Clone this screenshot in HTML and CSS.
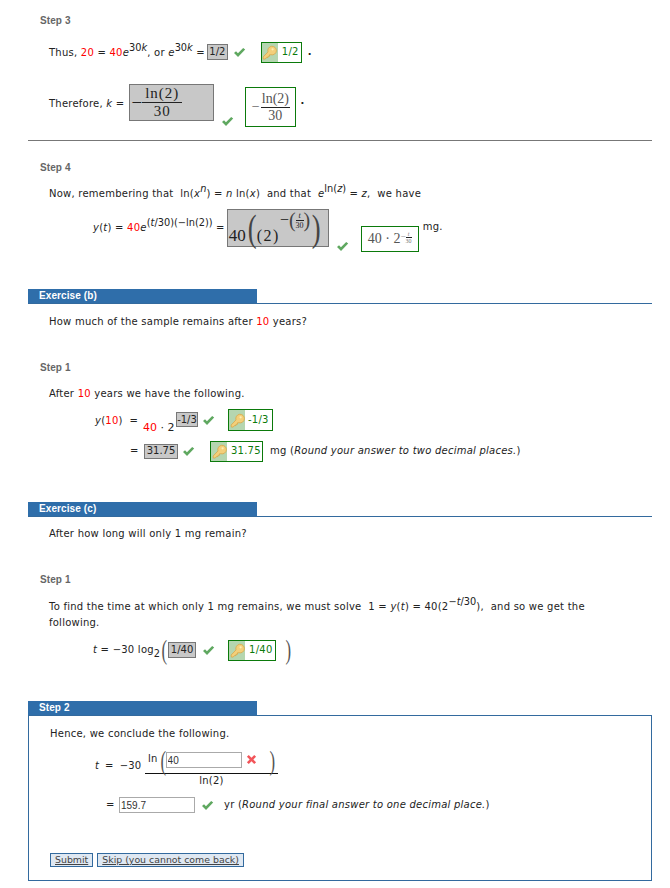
FILE: index.html
```html
<!DOCTYPE html>
<html lang="en">
<head>
<meta charset="utf-8">
<title>Exercise</title>
<link rel="stylesheet" href="styles.css">
</head>
<body>
<svg class="defs" width="0" height="0" aria-hidden="true">
  <symbol id="check" viewBox="0 0 14 12"><path d="M1 6.5 L3.2 4.6 L5.3 6.8 L11 1 L13.2 2.8 L5.4 11 Z" fill="#5fa860"/></symbol>
  <symbol id="cross" viewBox="0 0 12 12"><path d="M1 3 L3 1 L6 4 L9 1 L11 3 L8 6 L11 9 L9 11 L6 8 L3 11 L1 9 L4 6 Z" fill="#f2555a"/></symbol>
  <symbol id="key" viewBox="0 0 16 16"><path d="M1.2 12.8 L6.4 7.4 A4.6 4.6 0 1 1 9.6 10.4 L8 10.4 L8 12 L6.4 12 L6.4 13.4 L4.8 13.4 L3.4 15 L1.4 15 Z" fill="#f3cf7a" stroke="#d8a545" stroke-width=".8"/><circle cx="11.3" cy="4.6" r="1.2" fill="#fbeeb8"/></symbol>
</svg>
<main class="page">
  <h3 class="step">Step 3</h3>
  <div class="row r-thus">
    <span class="thus-label">Thus, <b class="num">20</b> = <b class="num">40</b><i>e</i><sup>30<i>k</i></sup>, or <i>e</i><sup>30<i>k</i></sup> =</span>
    <span class="given g-12">1/2</span>
    <svg class="check c-a"><use href="#check"/></svg>
    <span class="ans a-12"><span class="keycell"><svg class="key"><use href="#key"/></svg></span><span class="ansval">1/2</span></span>
    <span class="dot">.</span>
  </div>
  <div class="row r-there">
    <span class="there-label">Therefore, <i>k</i> =</span>
    <span class="given given-math g-k"><span class="minus">−</span><span class="frac"><span class="ftop">ln(2)</span><span class="fbot">30</span></span></span>
    <svg class="check c-k"><use href="#check"/></svg>
    <span class="mathans m-k"><span class="minus grey">−</span><span class="frac small"><span class="ftop">ln(2)</span><span class="fbot">30</span></span></span>
    <span class="dot dot-k">.</span>
  </div>
  <hr class="rule">

  <h3 class="step s4">Step 4</h3>
  <p class="line l-now">Now, remembering that&nbsp; ln(<i>x</i><sup><i>n</i></sup>) = <i>n</i> ln(<i>x</i>)&nbsp; and that&nbsp; <i>e</i><sup>ln(<i>z</i>)</sup> = <i>z</i>,&nbsp; we have</p>
  <div class="row r-yt">
    <span class="yt-label"><i>y</i>(<i>t</i>) = <b class="num">40</b><i>e</i><sup>(<i>t</i>/30)(−ln(2))</sup> =</span>
    <span class="given given-math g-exp"><span class="serif-big">40</span><span class="bigp">(</span><span class="serif-mid">(2)</span><span class="expo"><span class="minus">−</span><span class="midp">(</span><span class="frac tiny"><span class="ftop it">t</span><span class="fbot">30</span></span><span class="midp">)</span></span><span class="bigp">)</span></span>
    <svg class="check c-exp"><use href="#check"/></svg>
    <span class="mathans m-exp"><span>40 · 2</span><span class="msup">−</span><span class="frac micro"><span class="ftop it">t</span><span class="fbot">30</span></span></span>
    <span class="unit-mg">mg.</span>
  </div>

  <div class="tabbar tb-b"><span class="tab">Exercise (b)</span></div>
  <p class="line l-q">How much of the sample remains after <b class="num">10</b> years?</p>

  <h3 class="step s1b">Step 1</h3>
  <p class="line l-after">After <b class="num">10</b> years we have the following.</p>
  <div class="row r-y10">
    <span class="y10-label"><i>y</i>(<b class="num">10</b>)&nbsp; =</span>
    <span class="base"><b class="num">40</b> · 2</span>
    <span class="given g-13">-1/3</span>
    <svg class="check c-13"><use href="#check"/></svg>
    <span class="ans a-13"><span class="keycell"><svg class="key"><use href="#key"/></svg></span><span class="ansval">-1/3</span></span>
  </div>
  <div class="row r-eq">
    <span class="eq">=</span>
    <span class="given g-31">31.75</span>
    <svg class="check c-31"><use href="#check"/></svg>
    <span class="ans a-31"><span class="keycell"><svg class="key"><use href="#key"/></svg></span><span class="ansval">31.75</span></span>
    <span class="after-ans">mg (<i>Round your answer to two decimal places.</i>)</span>
  </div>

  <div class="tabbar tb-c"><span class="tab">Exercise (c)</span></div>
  <p class="line l-c">After how long will only 1 mg remain?</p>

  <h3 class="step s1c">Step 1</h3>
  <p class="line l-find">To find the time at which only 1 mg remains, we must solve&nbsp; 1 = <i>y</i>(<i>t</i>) = 40(2<sup>−<i>t</i>/30</sup>),&nbsp; and so we get the following.</p>
  <div class="row r-log">
    <span class="log-label"><i>t</i> = −30 log<sub>2</sub></span>
    <span class="logp">(</span>
    <span class="given g-140">1/40</span>
    <svg class="check c-140"><use href="#check"/></svg>
    <span class="ans a-140"><span class="keycell"><svg class="key"><use href="#key"/></svg></span><span class="ansval">1/40</span></span>
    <span class="logp lp-r">)</span>
  </div>

  <div class="tabbar tb-2"><span class="tab tab-step">Step 2</span></div>
  <section class="active">
    <p class="line l-hence">Hence, we conclude the following.</p>
    <div class="row r-t">
      <span class="t-label"><i>t</i> = −30</span>
      <span class="bigfrac">
        <span class="bf-top">
          <span class="ln-word">ln</span><span class="logp">(</span>
          <input class="field f-40" type="text" value="40" aria-label="answer">
          <svg class="cross"><use href="#cross"/></svg>
          <span class="logp lp-r2">)</span>
        </span>
        <span class="bf-bot">ln(2)</span>
      </span>
    </div>
    <div class="row r-final">
      <span class="eq-final">=</span>
      <input class="field f-final" type="text" value="159.7" aria-label="final answer">
      <svg class="check c-final"><use href="#check"/></svg>
      <span class="after-final">yr (<i>Round your final answer to one decimal place.</i>)</span>
    </div>
    <div class="buttons">
      <button class="btn" type="button">Submit</button>
      <button class="btn" type="button">Skip (you cannot come back)</button>
    </div>
  </section>
</main>
</body>
</html>
```

FILE: styles.css
```css
* { box-sizing: border-box; }
html, body { margin: 0; padding: 0; background: #fff; }
body { font-family: "DejaVu Sans", Verdana, sans-serif; font-size: 10px; letter-spacing: .24px; color: #222; line-height: 14px; }
.defs { position: absolute; }
.page { padding: 14px 18px 0 28px; width: 670px; }
i { font-style: italic; }
.num { color: #f00; font-weight: normal; }
sup { font-size: 9.8px; letter-spacing: 0; vertical-align: 5px; line-height: 0; }
sub { font-size: 9.8px; letter-spacing: 0; vertical-align: -4px; line-height: 0; }
.step { margin: 0 0 0 12px; font-family: "Liberation Sans", Arial, sans-serif; font-size: 10px; font-weight: bold; color: #666; line-height: 14px; letter-spacing: .1px; }
.line { margin: 0 0 0 21px; line-height: 16px; }
.row { display: flex; align-items: center; }
.dot { margin-left: 6px; font-weight: bold; }

.given { background: #c8c8c8; border: 1px solid #777; display: inline-flex; align-items: center; justify-content: center; flex: none; letter-spacing: 0; }
.given-math { font-family: "Liberation Serif", "Times New Roman", serif; color: #222; }
.check { width: 13px; height: 11px; flex: none; }
.ans { display: inline-flex; align-items: stretch; border: 1px solid #0b7a0b; background: #fff; color: #0b7a0b; flex: none; }
.keycell { background: #b5d6b0; width: 16px; display: flex; align-items: center; justify-content: center; flex: none; }
.key { width: 15px; height: 15px; }
.ansval { display: flex; align-items: center; padding: 0 0 0 4px; }
.mathans { border: 1px solid #0b7a0b; display: inline-flex; align-items: center; justify-content: center; font-family: "Liberation Serif", "Times New Roman", serif; color: #555; flex: none; letter-spacing: 0; }

.frac { display: inline-flex; flex-direction: column; align-items: center; font-size: 14px; line-height: 15px; }
.ftop { border-bottom: 1px solid #222; padding: 0 1px; text-align: center; width: 100%; }
.fbot { text-align: center; }
.it { font-style: italic; }
.minus { font-size: 14px; margin-right: 1px; }
.grey { color: #666; }

.r-thus { margin: 13px 0 0 21px; height: 22px; }
.thus-label { margin-top: 1px; }
.g-12 { width: 21px; height: 16px; margin-left: 2px; }
.c-a { margin-left: 5px; }
.a-12 { width: 41px; height: 21px; margin-left: 15px; }
.r-there { margin: 21px 0 0 21px; height: 44px; align-items: flex-start; }
.there-label { margin-top: 13px; }
.g-k { width: 85px; height: 37px; margin-left: 5px; justify-content: flex-start; padding-left: 1px; }
.g-k .minus { font-size: 19px; margin-right: 0; }
.g-k .frac { font-size: 15px; line-height: 17px; letter-spacing: 1px; }
.g-k .ftop { padding: 0 3px; }
.c-k { margin: 32px 0 0 7px; }
.m-k { width: 51px; height: 40px; margin: 3px 0 0 11px; }
.frac.small { font-size: 14px; line-height: 16px; }
.small .ftop { border-color: #222; color: #555; }
.dot-k { margin: 10px 0 0 4px; }
.rule { border: 0; border-top: 1px solid #777; margin: 12px 0 0; }

.s4 { margin-top: 20px; }
.l-now { margin-top: 11px; }
.r-yt { margin: 7px 0 0 65px; height: 43px; align-items: flex-start; }
.yt-label { margin-top: 12px; }
.g-exp { width: 102px; height: 38px; margin-left: 2px; justify-content: flex-start; padding-left: 1px; font-size: 15px; }
.serif-big { font-size: 17px; align-self: flex-end; margin-bottom: 3px; }
.bigp { font-size: 38px; line-height: 36px; color: #444; display: inline-block; width: 11px; text-align: center; transform: scaleX(.7); }
.serif-mid { font-size: 16px; align-self: flex-end; margin-bottom: 3px; letter-spacing: 1.5px; }
.expo { display: inline-flex; align-items: center; align-self: flex-start; }
.expo .minus { font-size: 16px; margin-right: 0; }
.midp { font-size: 20px; line-height: 20px; color: #444; }
.frac.tiny { font-size: 8px; line-height: 9px; }
.frac.micro { font-size: 6px; line-height: 6px; margin-bottom: 4px; color: #777; }
.c-exp { margin: 32px 0 0 7px; }
.m-exp { width: 58px; height: 26px; margin: 17px 0 0 12px; font-size: 14px; }
.msup { font-size: 9px; color: #777; margin-bottom: 6px; }
.unit-mg { margin: 11px 0 0 4px; }

.tabbar { border-bottom: 1px solid #336a9e; height: 15px; }
.tab { display: block; width: 229px; height: 14px; background: #2f6eaa; color: #fff; font-family: "Liberation Sans", Arial, sans-serif; font-size: 10px; font-weight: bold; line-height: 14px; padding-left: 11px; letter-spacing: .1px; }
.tb-b { margin-top: 37px; }
.l-q { margin-top: 10px; }
.s1b { margin-top: 31px; }
.l-after { margin-top: 11px; }
.r-y10 { margin: 7px 0 0 67px; height: 22px; }
.y10-label { margin-top: 2px; width: 48px; flex: none; }
.base { align-self: flex-end; width: 33px; flex: none; font-size: 11px; white-space: nowrap; letter-spacing: 0; margin-bottom: -4px; }
.g-13 { width: 22px; height: 15px; margin-top: -1px; }
.c-13 { margin-left: 4px; }
.a-13 { width: 45px; height: 22px; margin-left: 13px; }
.a-13 .ansval { padding-left: 3px; }
.r-eq { margin: 9px 0 0 102px; height: 22px; }
.eq { width: 14px; flex: none; }
.g-31 { width: 34px; height: 15px; }
.c-31 { margin-left: 4px; }
.a-31 { width: 53px; height: 21px; margin-left: 15px; }
.after-ans { margin-left: 7px; white-space: nowrap; }

.tb-c { margin-top: 40px; }
.l-c { margin-top: 9px; }
.s1c { margin-top: 31px; }
.l-find { margin-top: 12px; width: 548px; }
.r-log { margin: 7px 0 0 65px; height: 24px; }
.logp { font-family: "Liberation Serif", serif; font-size: 28px; line-height: 24px; color: #555; display: inline-block; width: 7px; text-align: center; transform: scaleX(.6); letter-spacing: 0; flex: none; }
.g-140 { width: 28px; height: 16px; margin-left: 1px; }
.c-140 { margin-left: 6px; }
.a-140 { width: 48px; height: 21px; margin-left: 13px; }
.lp-r { margin-left: 8px; }

.tb-2 { margin-top: 39px; }
.active { border: 1px solid #336a9e; border-top: 0; height: 165px; padding-top: 10px; }
.l-hence { margin: 0 0 0 21px; }
.r-t { margin: 9px 0 0 66px; height: 36px; align-items: flex-start; }
.t-label { margin-top: 8px; width: 50px; flex: none; white-space: nowrap; word-spacing: 2.5px; }
.bigfrac { display: inline-flex; flex-direction: column; width: 133px; flex: none; }
.bf-top { display: flex; align-items: flex-start; height: 23px; border-bottom: 1px solid #111; padding-left: 3px; }
.ln-word { margin-top: 1px; }
.bf-top .logp { margin: -2px 0 0 1px; }
.bf-top .lp-r2 { margin-left: 11px; }
.bf-bot { text-align: center; }
.field { font-family: "Liberation Sans", Arial, sans-serif; font-size: 10px; color: #333; border: 1px solid #aaa; background: #fff; padding: 0 0 0 1px; height: 16px; width: 76px; margin: 0; border-radius: 0; flex: none; }
.f-40 { margin-top: 1px; }
.cross { width: 11px; height: 11px; margin: 3px 0 0 4px; flex: none; }
.r-final { margin: 10px 0 0 77px; height: 16px; }
.eq-final { width: 13px; flex: none; }
.c-final { margin-left: 6px; }
.after-final { margin-left: 10px; white-space: nowrap; }
.buttons { display: flex; gap: 4px; margin: 40px 0 0 21px; }
.btn { font-family: "DejaVu Sans", Verdana, sans-serif; font-size: 9.4px; color: #444; text-decoration: underline; background: #dfe8f2; border: 1px solid #336a9e; height: 14px; line-height: 12px; padding: 0 4px; border-radius: 0; }
```
